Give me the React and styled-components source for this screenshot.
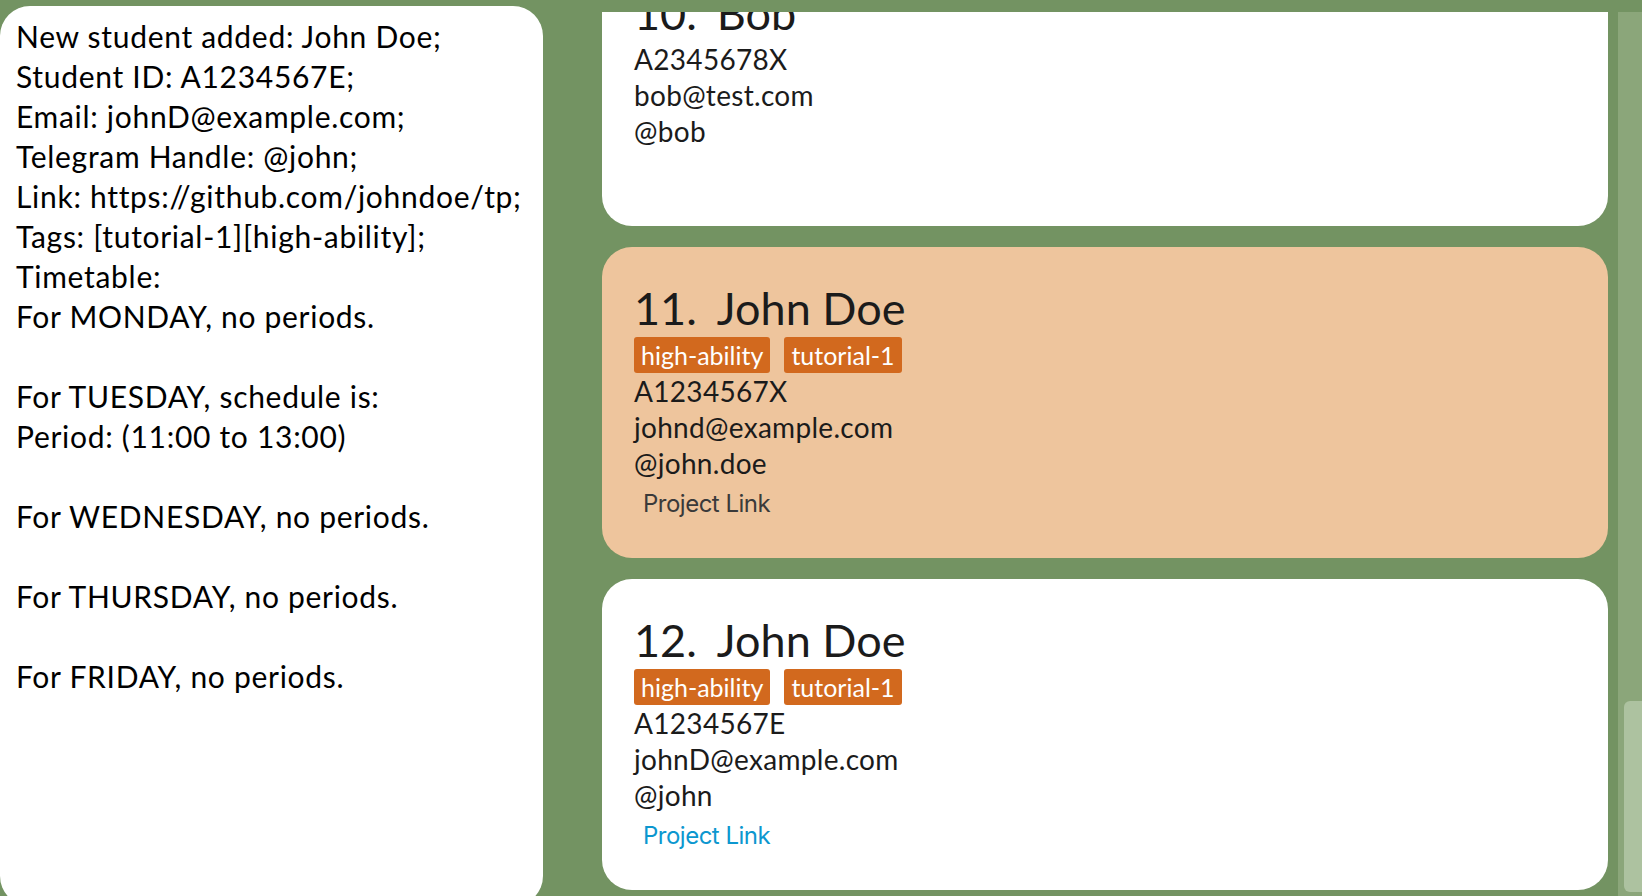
import React from 'react'
import styled, { createGlobalStyle } from 'styled-components'

const GlobalStyle = createGlobalStyle`
    html, body {
        margin: 0;
        padding: 0;
        background: #739362;
        overflow: hidden;
    }
`

const students = [
    {index: 10, name: 'Bob', id: 'A2345678X', email: 'bob@test.com', handle: '@bob', tags: [], link: ''},
    {index: 11, name: 'John Doe', id: 'A1234567X', email: 'johnd@example.com', handle: '@john.doe', tags: ['high-ability', 'tutorial-1'], link: 'Project Link', selected: true},
    {index: 12, name: 'John Doe', id: 'A1234567E', email: 'johnD@example.com', handle: '@john', tags: ['high-ability', 'tutorial-1'], link: 'Project Link'},
]

const resultText = `New student added: John Doe;
Student ID: A1234567E;
Email: johnD@example.com;
Telegram Handle: @john;
Link: https://github.com/johndoe/tp;
Tags: [tutorial-1][high-ability];
Timetable:
For MONDAY, no periods.

For TUESDAY, schedule is:
Period: (11:00 to 13:00)

For WEDNESDAY, no periods.

For THURSDAY, no periods.

For FRIDAY, no periods.`

const StudentCard = ({student}) => {
    return (
        <Card selected={student.selected}>
            <TitleRow>
                <span>{student.index}.</span>
                <span>{student.name}</span>
            </TitleRow>
            {student.tags.length > 0 && (
                <TagRow>
                    {student.tags.map(tag => <Tag key={tag}>{tag}</Tag>)}
                </TagRow>
            )}
            <Field>{student.id}</Field>
            <Field>{student.email}</Field>
            <Field>{student.handle}</Field>
            <ProjectLink selected={student.selected}>{student.link || '\u00a0'}</ProjectLink>
        </Card>
    )
}

const App = () => {
    return (
        <>
            <GlobalStyle />
            <Page>
                <ResultPanel>
                    <ResultText>{resultText}</ResultText>
                </ResultPanel>

                <ListArea>
                    <ListViewport>
                        <CardList>
                            {students.map(s => <StudentCard key={s.index} student={s} />)}
                        </CardList>
                    </ListViewport>
                    <ScrollTrack>
                        <ScrollThumb />
                    </ScrollTrack>
                </ListArea>
            </Page>
        </>
    )
}

export default App


//page layout
const Page = styled.div`
    width: 1642px;
    height: 896px;
    display: grid;
    grid-template-columns: 543px 1fr;
    overflow: hidden;
    background: #739362;
`

//left result box
const ResultPanel = styled.div`
    margin-top: 6px;
    height: 900px;
    background: #ffffff;
    border-radius: 30px;
    padding: 10px 0 0 16px;
    box-sizing: border-box;
`

const ResultText = styled.div`
    font-family: Lato, "Liberation Sans", sans-serif;
    font-size: 30px;
    line-height: 40px;
    letter-spacing: 0.7px;
    color: #000;
    white-space: pre-line;
`

//right list
const ListArea = styled.div`
    display: flex;
    padding-top: 12px;
    height: 896px;
    box-sizing: border-box;
`

const ListViewport = styled.div`
    flex: 1;
    overflow: hidden;
    padding-left: 59px;
`

const CardList = styled.div`
    display: flex;
    flex-direction: column;
    gap: 21px;
    margin-top: -60px;
`

const Card = styled.div`
    background: ${({selected}) => (selected ? '#EEC59D' : '#ffffff')};
    border-radius: 30px;
    padding: 33px 0 37px 32px;
    display: flex;
    flex-direction: column;
    align-items: flex-start;
    color: #1b1b1b;
    font-family: Lato, "Liberation Sans", sans-serif;
`

const TitleRow = styled.div`
    display: flex;
    gap: 20px;
    font-size: 45px;
    line-height: 56px;
`

const TagRow = styled.div`
    display: flex;
    gap: 14px;
    margin-top: 1px;
`

const Tag = styled.span`
    background: #D2691E;
    color: #ffffff;
    font-size: 25px;
    line-height: 36px;
    height: 36px;
    padding: 0 7px;
    border-radius: 3px;
`

const Field = styled.div`
    font-size: 28px;
    line-height: 36px;
    letter-spacing: 0.3px;
`

const ProjectLink = styled.div`
    margin: 6px 0 0 9px;
    font-family: Inter, Roboto, sans-serif;
    font-size: 24px;
    line-height: 34px;
    letter-spacing: -0.5px;
    color: ${({selected}) => (selected ? '#3a3a3a' : '#0C97CF')};
`

const ScrollTrack = styled.div`
    width: 24px;
    margin-left: 10px;
    background: #8BA67A;
    display: flex;
    flex-direction: column;
    justify-content: flex-end;
    padding: 0 0 4px 6px;
    box-sizing: border-box;
    overflow: hidden;
`

const ScrollThumb = styled.div`
    height: 191px;
    width: 26px;
    flex-shrink: 0;
    background: #ADC2A0;
    border-radius: 6px;
`
